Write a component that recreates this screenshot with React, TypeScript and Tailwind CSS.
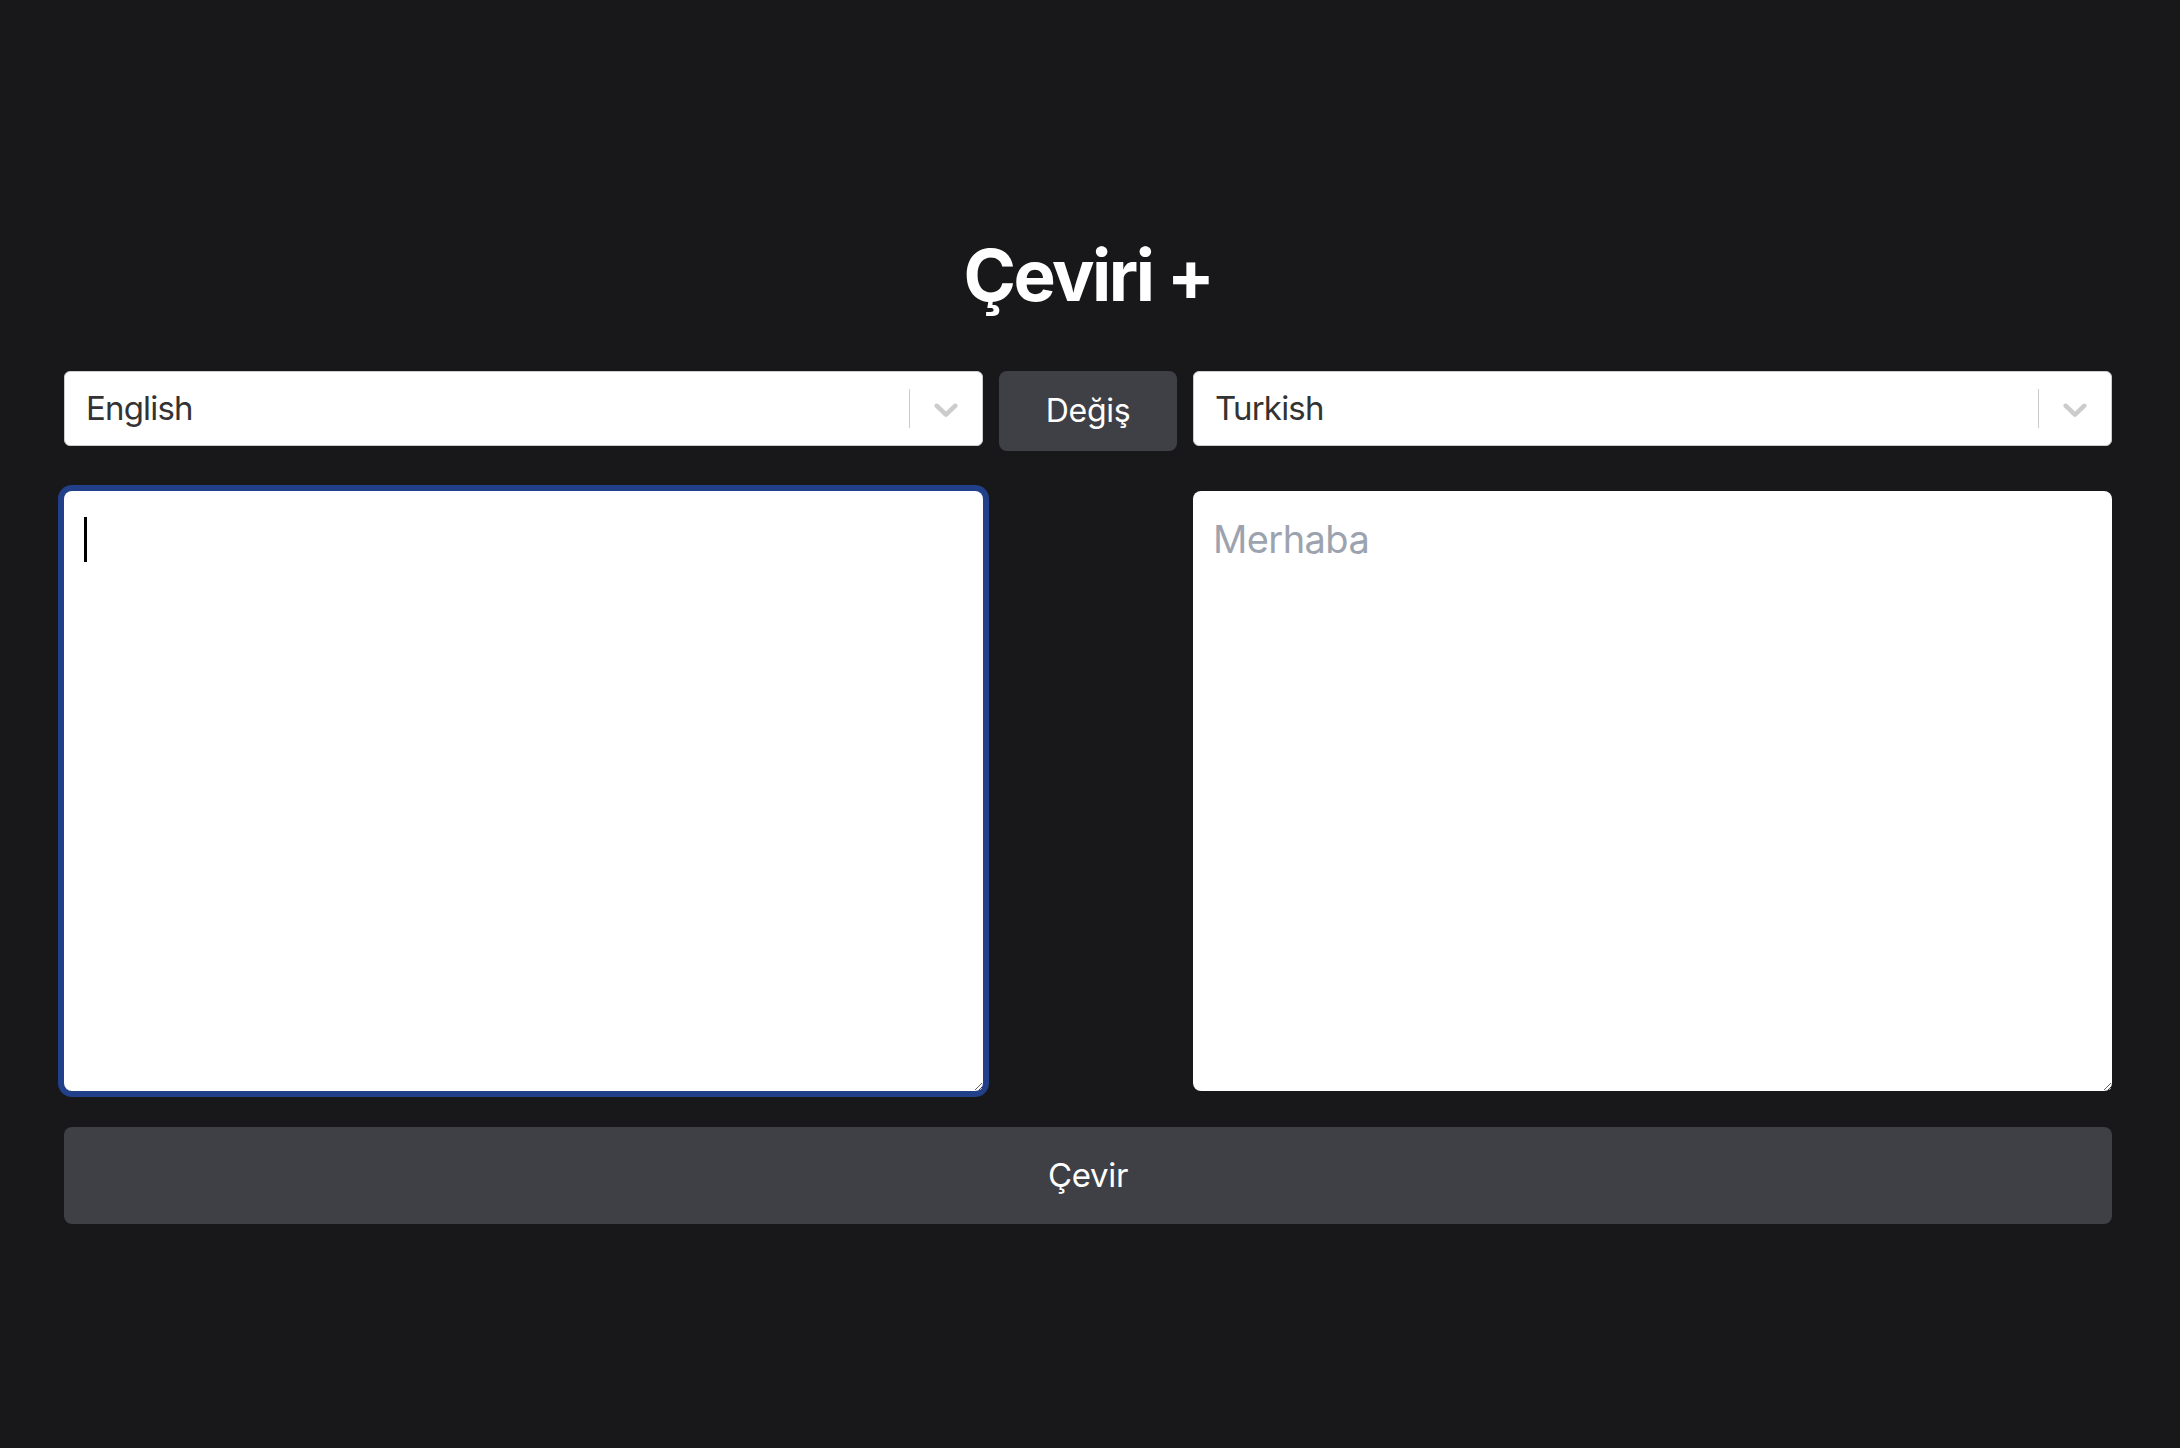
import React from "react";

function Chevron() {
  return (
    <svg width="40" height="40" viewBox="0 0 20 20" fill="#cccccc" aria-hidden="true">
      <path d="M4.516 7.548c0.436-0.446 1.043-0.481 1.576 0l3.908 3.747 3.908-3.747c0.533-0.481 1.141-0.446 1.574 0 0.436 0.445 0.408 1.197 0 1.615-0.406 0.418-4.695 4.502-4.695 4.502-0.217 0.223-0.502 0.335-0.787 0.335s-0.57-0.112-0.789-0.335c0 0-4.287-4.084-4.695-4.502s-0.436-1.17 0-1.615z" />
    </svg>
  );
}

function Select({ value }: { value: string }) {
  return (
    <div className="flex h-[75px] items-center rounded-[6px] border border-[#cccccc] bg-white">
      <div className="flex-1 pl-[21px] text-[33px] leading-none tracking-[-0.025em] text-[#333333]">{value}</div>
      <div className="my-[17px] w-px self-stretch bg-[#cccccc]" />
      <div className="flex items-center px-[16px]">
        <Chevron />
      </div>
    </div>
  );
}

export default function App() {
  return (
    <div
      className="h-[1448px] w-full bg-[#18181b]"
      style={{ fontFamily: "Inter, 'Noto Sans', sans-serif" }}
    >
      <div className="ml-[64px] w-[2048px] pt-[240px]">
        <h1 className="text-center text-[71px] font-bold leading-none tracking-[-0.035em] text-white">Çeviri +</h1>

        <div className="mt-[60px] grid grid-cols-[919px_178px_919px] items-start gap-x-[16px]">
          <Select value="English" />
          <button className="h-[80px] rounded-[8px] bg-[#3f3f46] text-[32px] tracking-[-0.01em] text-white">Değiş</button>
          <Select value="Turkish" />
        </div>

        <div className="mt-[40px] grid grid-cols-[919px_178px_919px] gap-x-[16px]">
          <div className="relative h-[600px]">
            <textarea
              className="block h-[600px] w-[919px] rounded-[8px] bg-white p-[20px] text-[38px] leading-[1.5] text-black outline-none shadow-[0_0_0_6px_#22408a]"
              defaultValue=""
            />
            <div className="pointer-events-none absolute left-[20px] top-[26px] h-[45px] w-[3px] bg-black" />
          </div>
          <div />
          <textarea
            className="block h-[600px] w-[919px] rounded-[8px] bg-white p-[20px] text-[38px] leading-[1.5] tracking-[-0.015em] text-black outline-none placeholder:text-[#9ca3af]"
            placeholder="Merhaba"
          />
        </div>

        <button className="mt-[36px] flex h-[97px] w-full items-center justify-center rounded-[8px] bg-[#3f3f46] text-[33px] tracking-[-0.01em] text-white">
          Çevir
        </button>
      </div>
    </div>
  );
}
